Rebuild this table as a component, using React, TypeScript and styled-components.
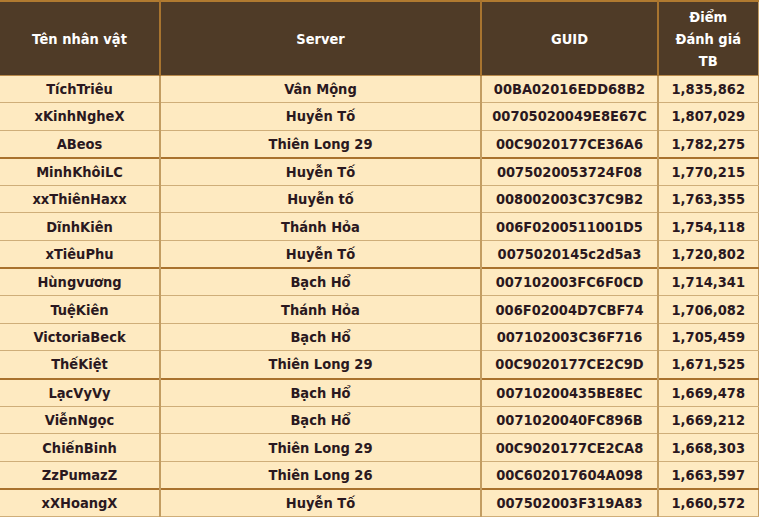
import React from "react";
import styled, { createGlobalStyle } from "styled-components";

const GlobalStyle = createGlobalStyle`
  html, body { margin: 0; padding: 0; background: #ffffff; }
`;

const FONT = `"DejaVu Sans Condensed", "DejaVu Sans", Verdana, sans-serif`;

const Table = styled.table`
  width: 758px;
  border-collapse: collapse;
  table-layout: fixed;
  border-top: 2px solid #b07a30;
  border-right: 1px solid #c29c64;
  font-family: ${FONT};
  font-stretch: condensed;
  font-weight: bold;
  font-size: 14.5px;
`;

const HeadCell = styled.th<{ $w: number }>`
  width: ${(p) => p.$w}px;
  height: 74px;
  padding: 1px 4px 0;
  box-sizing: border-box;
  background: #4f3b27;
  color: #ffffff;
  text-align: center;
  vertical-align: middle;
  line-height: 22px;
  border-right: 2px solid #a8742f;
  border-bottom: 1px solid #b8894a;
  &:last-child { border-right: none; }
`;

const Row = styled.tr<{ $thick: boolean }>`
  height: 27.6px;
  border-bottom: ${(p) => (p.$thick ? "2px solid #a9722e" : "1px solid #cfae79")};
`;

const Cell = styled.td`
  padding: 0 4px;
  background: #feeac1;
  color: #2a1820;
  text-align: center;
  vertical-align: middle;
  white-space: nowrap;
  border-right: 2px solid #c39d62;
  &:last-child { border-right: none; }
`;

const rows: [string, string, string, string][] = [
  ["TíchTriêu", "Vân Mộng", "00BA02016EDD68B2", "1,835,862"],
  ["xKinhNgheX", "Huyễn Tố", "00705020049E8E67C", "1,807,029"],
  ["ABeos", "Thiên Long 29", "00C9020177CE36A6", "1,782,275"],
  ["MinhKhôiLC", "Huyễn Tố", "0075020053724F08", "1,770,215"],
  ["xxThiênHaxx", "Huyễn tố", "008002003C37C9B2", "1,763,355"],
  ["DĩnhKiên", "Thánh Hỏa", "006F0200511001D5", "1,754,118"],
  ["xTiêuPhu", "Huyễn Tố", "0075020145c2d5a3", "1,720,802"],
  ["Hùngvương", "Bạch Hổ", "007102003FC6F0CD", "1,714,341"],
  ["TuệKiên", "Thánh Hỏa", "006F02004D7CBF74", "1,706,082"],
  ["VictoriaBeck", "Bạch Hổ", "007102003C36F716", "1,705,459"],
  ["ThếKiệt", "Thiên Long 29", "00C9020177CE2C9D", "1,671,525"],
  ["LạcVyVy", "Bạch Hổ", "00710200435BE8EC", "1,669,478"],
  ["ViễnNgọc", "Bạch Hổ", "0071020040FC896B", "1,669,212"],
  ["ChiếnBinh", "Thiên Long 29", "00C9020177CE2CA8", "1,668,303"],
  ["ZzPumazZ", "Thiên Long 26", "00C602017604A098", "1,663,597"],
  ["xXHoangX", "Huyễn Tố", "007502003F319A83", "1,660,572"],
];

export default function App() {
  return (
    <>
      <GlobalStyle />
      <Table>
        <thead>
          <tr>
            <HeadCell $w={160}>Tên nhân vật</HeadCell>
            <HeadCell $w={321}>Server</HeadCell>
            <HeadCell $w={177}>GUID</HeadCell>
            <HeadCell $w={100}>
              Điểm
              <br />
              Đánh giá
              <br />
              TB
            </HeadCell>
          </tr>
        </thead>
        <tbody>
          {rows.map((r, i) => (
            <Row key={i} $thick={i % 4 === 2}>
              {r.map((c, j) => (
                <Cell key={j}>{c}</Cell>
              ))}
            </Row>
          ))}
        </tbody>
      </Table>
    </>
  );
}
